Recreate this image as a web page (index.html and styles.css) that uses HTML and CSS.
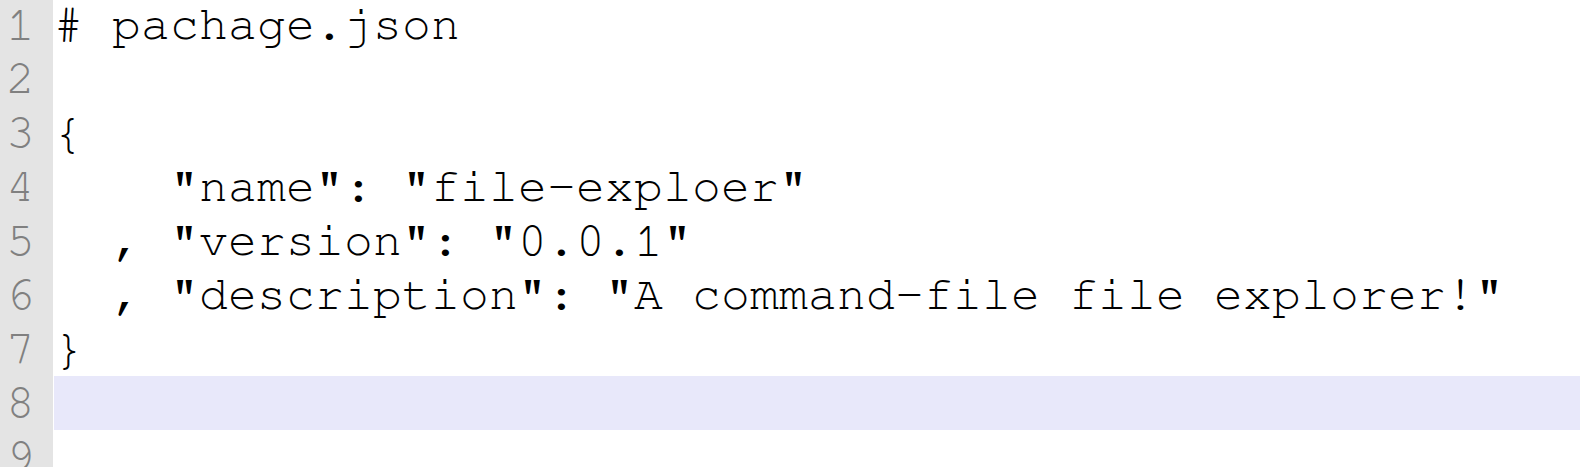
FILE: index.html
```html
<!DOCTYPE html>
<html>
<head>
<meta charset="utf-8">
<link rel="stylesheet" href="styles.css">
</head>
<body>
<div class="editor">
  <div class="line"><span class="num">1</span><span class="code"># pachage.json</span></div>
  <div class="line"><span class="num">2</span><span class="code"></span></div>
  <div class="line"><span class="num">3</span><span class="code">{</span></div>
  <div class="line"><span class="num">4</span><span class="code">    "name": "file-exploer"</span></div>
  <div class="line"><span class="num">5</span><span class="code">  , "version": "0.0.1"</span></div>
  <div class="line"><span class="num">6</span><span class="code">  , "description": "A command-file file explorer!"</span></div>
  <div class="line"><span class="num">7</span><span class="code">}</span></div>
  <div class="line current"><span class="num">8</span><span class="code"></span></div>
  <div class="line"><span class="num">9</span><span class="code"></span></div>
</div>
</body>
</html>
```
FILE: styles.css
```css
html, body {
  margin: 0;
  padding: 0;
  background: #ffffff;
  height: 100%;
  overflow: hidden;
}
.editor {
  margin-top: -2px;
  font-family: "FreeMono", "Nimbus Mono PS", "Nimbus Mono L", "Courier New", "Liberation Mono", monospace;
  font-size: 48px;
  line-height: 54px;
  letter-spacing: 0.2px;
}
.line {
  display: flex;
  height: 54px;
}
.num {
  width: 47px;
  padding-left: 6px;
  flex: none;
  background: #e4e4e4;
  color: #808080;
  margin-right: 1px;
}
.code {
  flex: 1;
  white-space: pre;
  color: #000000;
}
.current .code {
  background: #e8e8fa;
}
```
